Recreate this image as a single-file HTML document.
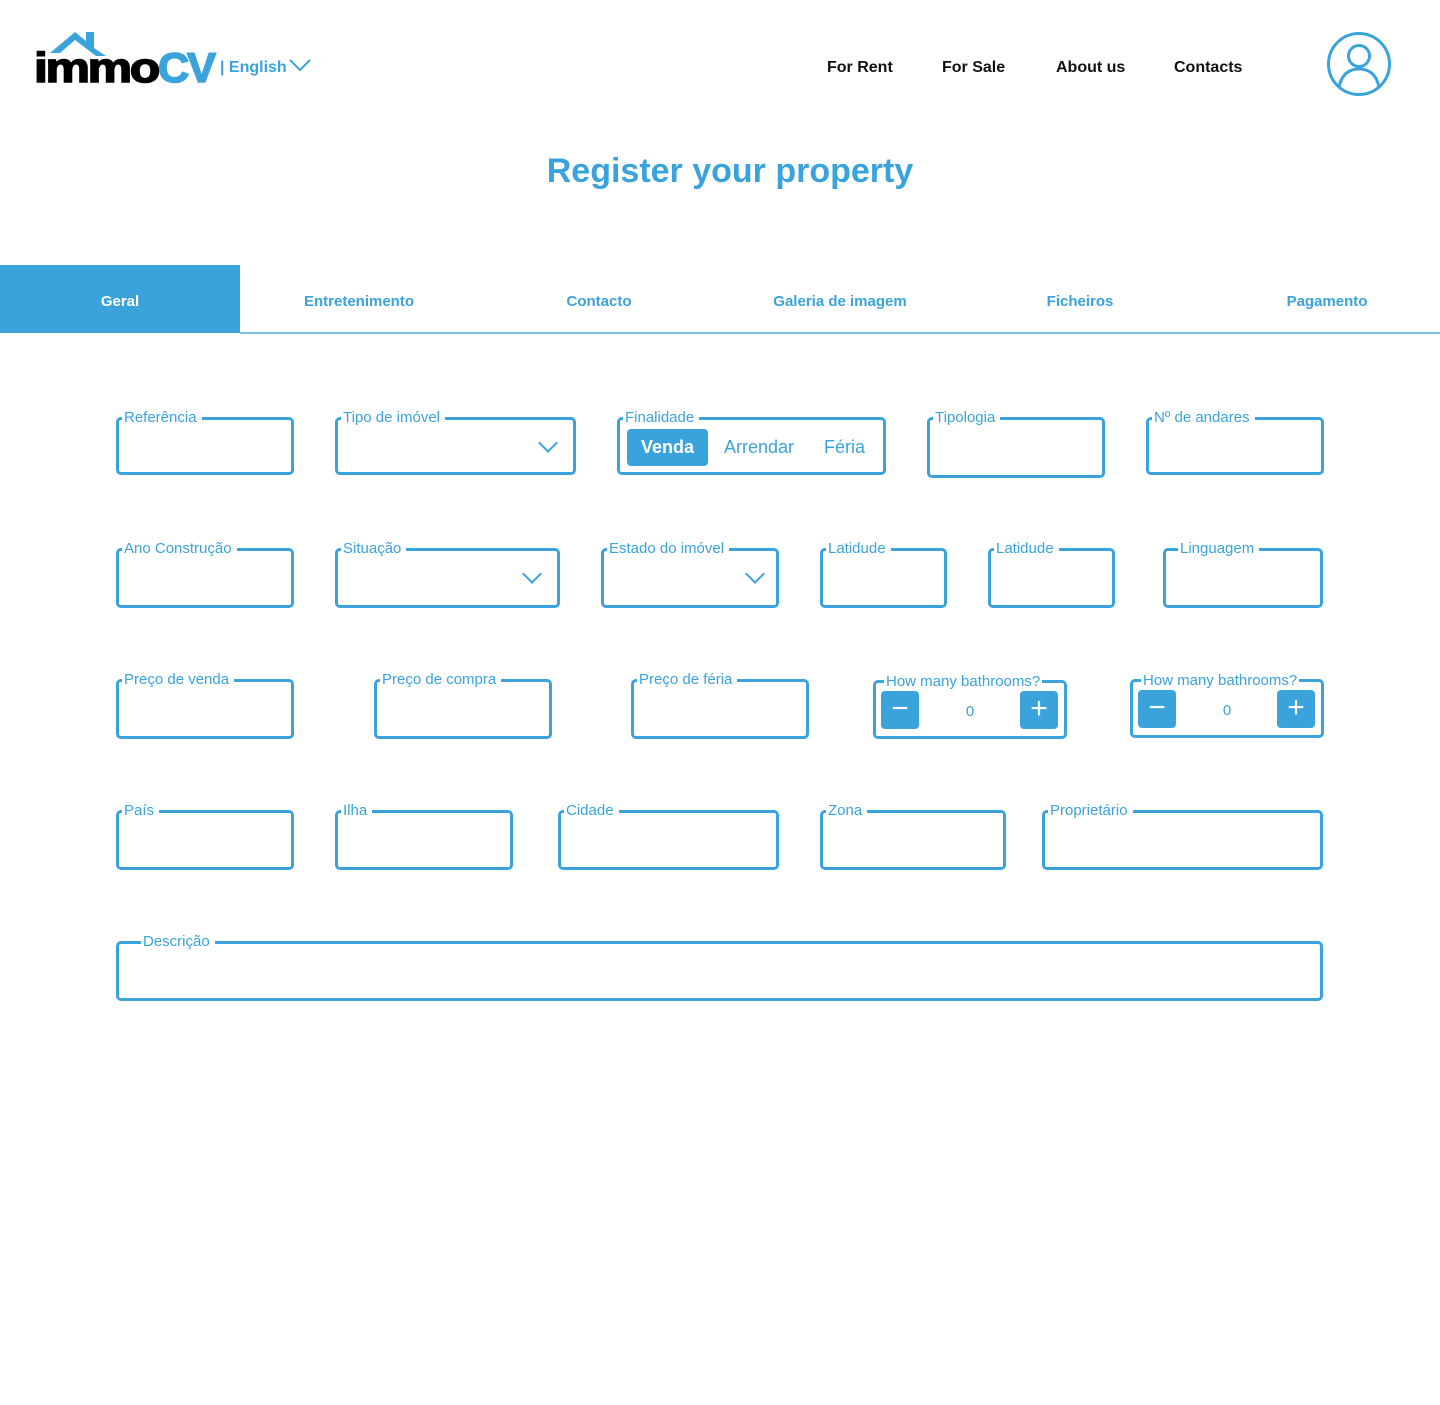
<!DOCTYPE html>
<html><head><meta charset="utf-8"><style>
*{margin:0;padding:0;box-sizing:border-box}
body{width:1440px;height:1405px;background:#fff;font-family:"Liberation Sans",Arial,sans-serif;position:relative;overflow:hidden;color:#3aa3dc}
.a{position:absolute}
.nav{position:absolute;top:59px;font-size:16px;font-weight:bold;color:#111}
.tab{position:absolute;top:266px;height:68px;line-height:72px;font-size:15px;font-weight:bold;color:#3aa3dc;text-align:center;width:240px}
.f{position:absolute;border:3px solid #3aa3dc;border-radius:5px;height:58px}
.f>span{position:absolute;top:-11px;left:3px;background:#fff;padding:0 5px 0 2px;font-size:15px;line-height:18px;white-space:nowrap}
.chev{position:absolute;right:14px;width:14px;height:14px;border-right:2px solid #3aa3dc;border-bottom:2px solid #3aa3dc;transform:rotate(45deg);top:16px}
.btn{position:absolute;top:8px;width:38px;height:38px;background:#3aa3dc;border-radius:4px;color:#fff;font-size:30px;line-height:36px;text-align:center}
.num{position:absolute;left:0;right:0;top:20px;text-align:center;font-size:15px}
</style></head><body>
<svg class="a" style="left:34px;top:29px" width="280" height="56" viewBox="0 0 280 56">
<path d="M16 24 L41 3 L52 12 L52 3 L60 3 L60 19 L72 27 L62 27 L41 11 L26 24Z" fill="#3aa3dc"/>
<text x="0" y="53" font-family="Liberation Sans" font-weight="900" font-size="42" fill="#000" letter-spacing="-2" textLength="124" lengthAdjust="spacingAndGlyphs" stroke="#000" stroke-width="1.5">immo</text>
<text x="124" y="53" font-family="Liberation Sans" font-weight="900" font-size="42" fill="#3aa3dc" letter-spacing="-2" textLength="56" lengthAdjust="spacingAndGlyphs" stroke="#3aa3dc" stroke-width="1.5">CV</text>
<text x="186" y="43" font-family="Liberation Sans" font-weight="bold" font-size="16" fill="#3aa3dc">| English</text>
<path d="M256 31 L266 41 L276 31" stroke="#3aa3dc" stroke-width="2" fill="none"/>
</svg>
<div class="nav" style="left:827px">For Rent</div>
<div class="nav" style="left:942px">For Sale</div>
<div class="nav" style="left:1056px">About us</div>
<div class="nav" style="left:1174px">Contacts</div>
<svg class="a" style="left:1326px;top:31px" width="66" height="66" viewBox="0 0 66 66">
<circle cx="33" cy="33" r="30.5" fill="none" stroke="#3aa3dc" stroke-width="3"/>
<circle cx="33" cy="25" r="10.5" fill="none" stroke="#3aa3dc" stroke-width="3"/>
<path d="M13 56 C16 42 24 38 33 38 C42 38 50 42 53 56" fill="none" stroke="#3aa3dc" stroke-width="3"/>
</svg>
<div class="a" style="left:20px;right:0;top:152px;text-align:center;font-size:34px;font-weight:bold;color:#3aa3dc">Register your property</div>
<div class="a" style="left:0;top:265px;width:240px;height:68px;background:#3aa3dc"></div>
<div class="a" style="left:240px;top:332px;width:1200px;height:2px;background:#7cc1e8"></div>
<div class="tab" style="left:0;color:#fff">Geral</div>
<div class="tab" style="left:239px">Entretenimento</div>
<div class="tab" style="left:479px">Contacto</div>
<div class="tab" style="left:720px">Galeria de imagem</div>
<div class="tab" style="left:960px">Ficheiros</div>
<div class="tab" style="left:1207px">Pagamento</div>
<div class="f" style="left:116px;top:417px;width:178px"><span>Referência</span></div>
<div class="f" style="left:335px;top:417px;width:241px"><span>Tipo de imóvel</span><div class="chev" style="right:18px"></div></div>
<div class="f" style="left:617px;top:417px;width:269px"><span>Finalidade</span>
<div class="a" style="left:7px;top:9px;width:81px;height:37px;background:#3aa3dc;border-radius:4px;color:#fff;font-weight:bold;font-size:18px;text-align:center;line-height:37px">Venda</div>
<div class="a" style="left:104px;top:9px;font-size:18px;line-height:37px">Arrendar</div>
<div class="a" style="left:204px;top:9px;font-size:18px;line-height:37px">Féria</div></div>
<div class="f" style="left:927px;top:417px;width:178px;height:61px"><span>Tipologia</span></div>
<div class="f" style="left:1146px;top:417px;width:178px"><span>Nº de andares</span></div>
<div class="f" style="left:116px;top:548px;width:178px;height:60px"><span>Ano Construção</span></div>
<div class="f" style="left:335px;top:548px;width:225px;height:60px"><span>Situação</span><div class="chev" style="right:18px"></div></div>
<div class="f" style="left:601px;top:548px;width:178px;height:60px"><span>Estado do imóvel</span><div class="chev" style="right:14px"></div></div>
<div class="f" style="left:820px;top:548px;width:127px;height:60px"><span>Latidude</span></div>
<div class="f" style="left:988px;top:548px;width:127px;height:60px"><span>Latidude</span></div>
<div class="f" style="left:1163px;top:548px;width:160px;height:60px"><span style="left:12px">Linguagem</span></div>
<div class="f" style="left:116px;top:679px;width:178px;height:60px"><span>Preço de venda</span></div>
<div class="f" style="left:374px;top:679px;width:178px;height:60px"><span>Preço de compra</span></div>
<div class="f" style="left:631px;top:679px;width:178px;height:60px"><span>Preço de féria</span></div>
<div class="f" style="left:873px;top:680px;width:194px;height:59px"><span style="left:8px;padding:0 2px;top:-10px">How many bathrooms?</span>
<div class="btn" style="left:5px">−</div><div class="num">0</div><div class="btn" style="right:6px">+</div></div>
<div class="f" style="left:1130px;top:679px;width:194px;height:59px"><span style="left:8px;padding:0 2px;top:-10px">How many bathrooms?</span>
<div class="btn" style="left:5px">−</div><div class="num">0</div><div class="btn" style="right:6px">+</div></div>
<div class="f" style="left:116px;top:810px;width:178px;height:60px"><span>País</span></div>
<div class="f" style="left:335px;top:810px;width:178px;height:60px"><span>Ilha</span></div>
<div class="f" style="left:558px;top:810px;width:221px;height:60px"><span>Cidade</span></div>
<div class="f" style="left:820px;top:810px;width:186px;height:60px"><span>Zona</span></div>
<div class="f" style="left:1042px;top:810px;width:281px;height:60px"><span>Proprietário</span></div>
<div class="f" style="left:116px;top:941px;width:1207px;height:60px"><span style="left:22px">Descrição</span></div>
</body></html>
